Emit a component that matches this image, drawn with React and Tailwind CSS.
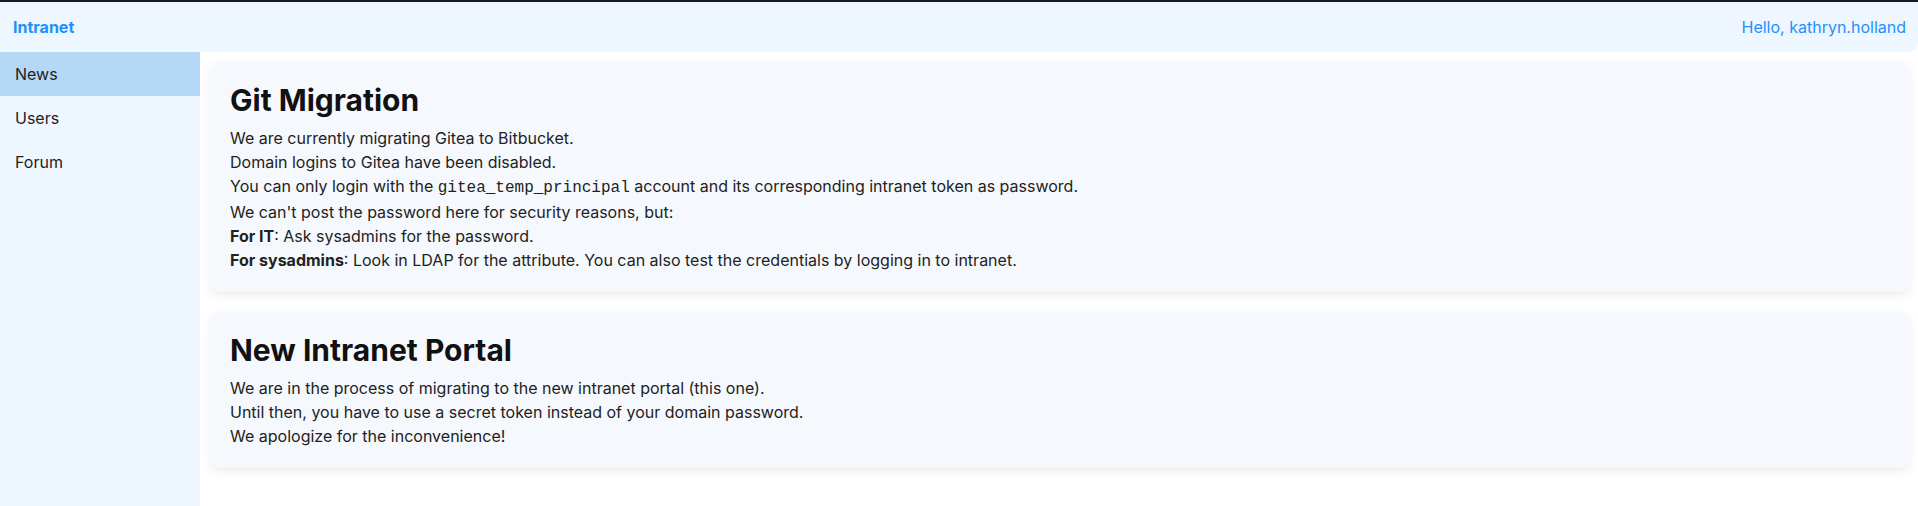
import React from 'react';

const navItems = ['News', 'Users', 'Forum'];

function Card({ title, children }) {
  return (
    <section className="bg-[#f5f9fe] rounded-[10px] shadow-[0_3px_10px_rgba(0,0,0,0.08)] p-5">
      <h1 className="text-[30px] leading-[36px] font-bold text-[#111] mb-2">{title}</h1>
      <div className="text-base leading-6 text-[#222]">{children}</div>
    </section>
  );
}

export default function App() {
  return (
    <div
      className="min-h-screen flex flex-col bg-white border-t-2 border-[#16181c]"
      style={{ fontFamily: 'Inter, "Noto Sans", sans-serif' }}
    >
      {/* Top bar */}
      <header className="h-[50px] flex items-center justify-between px-3 bg-[#eef6ff] rounded-br-[10px]">
        <span className="font-bold text-base text-[#1e90ff] pl-px">Intranet</span>
        <span className="text-base text-[#1e90ff]">Hello, kathryn.holland</span>
      </header>

      <div className="flex flex-1">
        {/* Sidebar */}
        <nav className="w-[200px] shrink-0 bg-[#eef6ff]">
          {navItems.map((item, i) => (
            <div
              key={item}
              className={`px-[15px] py-2.5 text-base leading-6 text-[#222] ${i === 0 ? 'bg-[#b5d8f7]' : ''}`}
            >
              {item}
            </div>
          ))}
        </nav>

        {/* Main */}
        <main className="flex-1 pl-[10px] pr-2 pt-[10px] flex flex-col gap-5">
          <Card title="Git Migration">
            <p>We are currently migrating Gitea to Bitbucket.</p>
            <p>Domain logins to Gitea have been disabled.</p>
            <p>
              You can only login with the{' '}
              <code style={{ fontFamily: '"Liberation Mono", monospace' }}>gitea_temp_principal</code>{' '}
              account and its corresponding intranet token as password.
            </p>
            <p>We can't post the password here for security reasons, but:</p>
            <p>
              <b className="font-bold">For IT</b>: Ask sysadmins for the password.
            </p>
            <p>
              <b className="font-bold">For sysadmins</b>: Look in LDAP for the attribute. You can also test the credentials by logging in to intranet.
            </p>
          </Card>

          <Card title="New Intranet Portal">
            <p>We are in the process of migrating to the new intranet portal (this one).</p>
            <p>Until then, you have to use a secret token instead of your domain password.</p>
            <p>We apologize for the inconvenience!</p>
          </Card>
        </main>
      </div>
    </div>
  );
}
